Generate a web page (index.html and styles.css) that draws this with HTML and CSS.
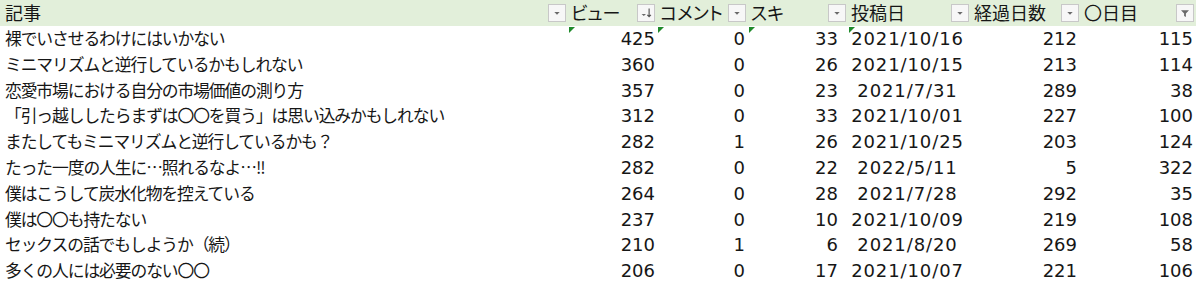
FILE: index.html
```html
<!DOCTYPE html>
<html lang="ja">
<head>
<meta charset="utf-8">
<link rel="stylesheet" href="styles.css">
</head>
<body>
<div class="sheet">
  <div class="hd c-a"><span class="lbl">記事</span><span class="fbtn"><svg viewBox="0 0 18 18"><path d="M6 8h6l-3 3z" class="tri"/></svg></span></div>
  <div class="hd c-b"><span class="lbl">ビュー</span><span class="fbtn"><svg viewBox="0 0 18 18"><path d="M4 10h5l-2.5 2.5z" class="tri"/><path d="M12.5 4v9M10.5 11l2 2.2 2-2.2" class="arr"/></svg></span></div>
  <div class="hd c-c"><span class="lbl">コメント</span><span class="fbtn"><svg viewBox="0 0 18 18"><path d="M6 8h6l-3 3z" class="tri"/></svg></span></div>
  <div class="hd c-d"><span class="lbl">スキ</span><span class="fbtn"><svg viewBox="0 0 18 18"><path d="M6 8h6l-3 3z" class="tri"/></svg></span></div>
  <div class="hd c-e"><span class="lbl">投稿日</span><span class="fbtn"><svg viewBox="0 0 18 18"><path d="M6 8h6l-3 3z" class="tri"/></svg></span></div>
  <div class="hd c-f"><span class="lbl">経過日数</span><span class="fbtn"><svg viewBox="0 0 18 18"><path d="M6 8h6l-3 3z" class="tri"/></svg></span></div>
  <div class="hd c-g"><span class="lbl">〇日目</span><span class="fbtn"><svg viewBox="0 0 18 18"><path d="M4.5 6h9l-3.5 3.5v4l-2 -1v-3z" class="tri"/></svg></span></div>

  <div class="t">裸でいさせるわけにはいかない</div><div class="n nb flag">425</div><div class="n nc flag">0</div><div class="n nd flag">33</div><div class="d flag">2021/10/16</div><div class="n nf">212</div><div class="n ng">115</div>
  <div class="t">ミニマリズムと逆行しているかもしれない</div><div class="n nb">360</div><div class="n nc">0</div><div class="n nd">26</div><div class="d">2021/10/15</div><div class="n nf">213</div><div class="n ng">114</div>
  <div class="t">恋愛市場における自分の市場価値の測り方</div><div class="n nb">357</div><div class="n nc">0</div><div class="n nd">23</div><div class="d">2021/7/31</div><div class="n nf">289</div><div class="n ng">38</div>
  <div class="t">「引っ越ししたらまずは〇〇を買う」は思い込みかもしれない</div><div class="n nb">312</div><div class="n nc">0</div><div class="n nd">33</div><div class="d">2021/10/01</div><div class="n nf">227</div><div class="n ng">100</div>
  <div class="t">またしてもミニマリズムと逆行しているかも？</div><div class="n nb">282</div><div class="n nc">1</div><div class="n nd">26</div><div class="d">2021/10/25</div><div class="n nf">203</div><div class="n ng">124</div>
  <div class="t">たった一度の人生に…照れるなよ…!!</div><div class="n nb">282</div><div class="n nc">0</div><div class="n nd">22</div><div class="d">2022/5/11</div><div class="n nf">5</div><div class="n ng">322</div>
  <div class="t">僕はこうして炭水化物を控えている</div><div class="n nb">264</div><div class="n nc">0</div><div class="n nd">28</div><div class="d">2021/7/28</div><div class="n nf">292</div><div class="n ng">35</div>
  <div class="t">僕は〇〇も持たない</div><div class="n nb">237</div><div class="n nc">0</div><div class="n nd">10</div><div class="d">2021/10/09</div><div class="n nf">219</div><div class="n ng">108</div>
  <div class="t">セックスの話でもしようか（続）</div><div class="n nb">210</div><div class="n nc">1</div><div class="n nd">6</div><div class="d">2021/8/20</div><div class="n nf">269</div><div class="n ng">58</div>
  <div class="t">多くの人には必要のない〇〇</div><div class="n nb">206</div><div class="n nc">0</div><div class="n nd">17</div><div class="d">2021/10/07</div><div class="n nf">221</div><div class="n ng">106</div>
</div>
</body>
</html>
```

FILE: styles.css
```css
html, body {
  margin: 0;
  padding: 0;
  background: #ffffff;
}
body {
  width: 1200px;
  height: 284px;
  overflow: hidden;
  color: #161616;
  font-family: "Noto Sans CJK JP", sans-serif;
}
.sheet {
  display: grid;
  grid-template-columns: 568px 89px 91px 100px 123px 110px 115px;
  grid-template-rows: 26px repeat(10, 25.8px);
}
.hd {
  background: #e2efda;
  display: flex;
  align-items: center;
  justify-content: space-between;
  padding: 0 2px 0 3px;
  font-size: 18px;
  font-feature-settings: "palt";
  line-height: 1;
  overflow: hidden;
}
.c-a { padding-left: 5px; }
.lbl {
  white-space: nowrap;
  position: relative;
  top: -1px;
}
.fbtn {
  flex: none;
  width: 18px;
  height: 18px;
  box-sizing: border-box;
  border: 1px solid #c8c8c8;
  background: #f7f7f7;
  display: flex;
}
.fbtn svg {
  width: 100%;
  height: 100%;
}
.tri { fill: #6a6a6a; }
.arr { fill: none; stroke: #555; stroke-width: 1.3; }
.t {
  font-size: 16.8px;
  letter-spacing: -1.1px;
  padding-left: 5px;
  line-height: 25.8px;
  white-space: nowrap;
}
.n, .d {
  font-family: "DejaVu Sans", "Noto Sans CJK JP", sans-serif;
  font-size: 18px;
  line-height: 25.8px;
  white-space: nowrap;
  position: relative;
}
.n { text-align: right; }
.nb { padding-right: 2px; }
.nc { padding-right: 3px; }
.nd { padding-right: 10px; }
.nf { padding-right: 4px; }
.ng { padding-right: 3px; }
.d {
  text-align: center;
  padding-right: 4px;
  letter-spacing: 0.9px;
}
.flag::before {
  content: "";
  position: absolute;
  left: 1px;
  top: 1px;
  width: 0;
  height: 0;
  border-top: 6px solid #1f8a2a;
  border-right: 6px solid transparent;
}
```
